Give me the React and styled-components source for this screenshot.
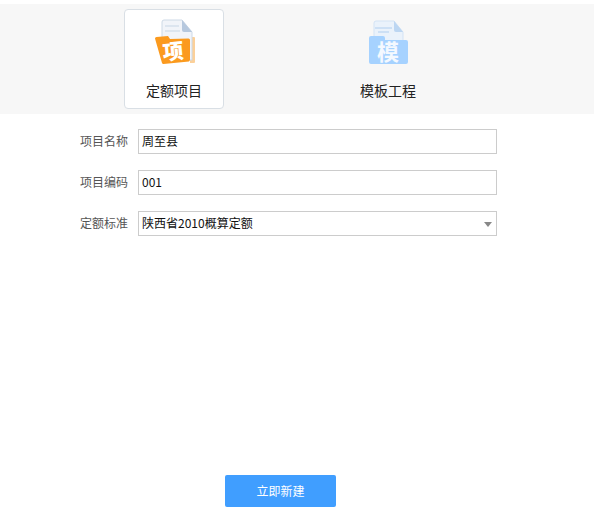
import React, { useState } from 'react'
import styled, { createGlobalStyle } from 'styled-components'

const Global = createGlobalStyle`
	html, body {
		margin: 0;
		padding: 0;
		background: #fff;
		font-family: "Noto Sans CJK SC", "Liberation Sans", sans-serif;
	}
`

const Page = styled.div`
	width: 594px;
	height: 528px;
	padding-top: 4px;
	box-sizing: border-box;
	display: flex;
	flex-direction: column;
`

const Tabs = styled.div`
	height: 110px;
	background: #f7f7f7;
	display: flex;
	gap: 114px;
	padding: 5px 0 0 124px;
	box-sizing: border-box;
`

const Tab = styled.div`
	width: 100px;
	height: 100px;
	box-sizing: border-box;
	border-radius: 4px;
	border: 1px solid ${p => (p.$active ? '#d9dfe5' : 'transparent')};
	background: ${p => (p.$active ? '#fff' : 'transparent')};
	display: flex;
	flex-direction: column;
	align-items: center;
	padding-top: 9px;
	cursor: pointer;
`

const TabIcon = styled.svg`
	width: 46px;
	height: 48px;
	display: block;
`

const TabLabel = styled.span`
	margin-top: 13px;
	font-size: 14px;
	line-height: 20px;
	color: #222;
`

const Form = styled.div`
	display: flex;
	flex-direction: column;
	gap: 16px;
	padding-top: 15px;
`

const Row = styled.div`
	display: flex;
	align-items: center;
	gap: 10px;
`

const Label = styled.label`
	width: 128px;
	text-align: right;
	font-size: 12px;
	line-height: 16px;
	padding-bottom: 2px;
	color: #555;
`

const Field = styled.div`
	position: relative;
	width: 359px;
	height: 25px;
	box-sizing: border-box;
	border: 1px solid #ccc;
	background: #fff;
	display: flex;
	align-items: center;
	padding: 0 3px 2px;
	font-size: 12px;
	color: #111;
`

const Arrow = styled.i`
	position: absolute;
	right: 4px;
	top: 10px;
	border-left: 4px solid transparent;
	border-right: 4px solid transparent;
	border-top: 5px solid #888;
`

const Footer = styled.div`
	margin-top: auto;
	padding: 0 0 21px 225px;
`

const Submit = styled.button`
	width: 111px;
	height: 32px;
	border: none;
	border-radius: 2px;
	padding: 0 0 1px;
	background: #409eff;
	color: #fff;
	font-family: inherit;
	font-size: 12px;
	cursor: pointer;
`

function ProjectIcon() {
	return (
		<TabIcon viewBox="0 0 46 48">
			<path d="M39 18h4a1 1 0 0 1 1 1v24a1 1 0 0 1-1 1h-4z" fill="#fbd09a" />
			<path d="M11 3a2 2 0 0 1 2-2h18l10 12v28H11z" fill="#f1f4f9" stroke="#cdd9e6" strokeWidth="1" />
			<path d="M31 1l10 12h-8a2 2 0 0 1-2-2z" fill="#b6c8de" />
			<path d="M14 7h14M14 12h15" stroke="#d5dfeb" strokeWidth="1.500" />
			<path d="M4 19.500a1.500 1.500 0 0 1 1.500-1.500L17 17l2 3 18.500-.5a1.500 1.500 0 0 1 1.500 1.500v20l-1 1.500L12.500 45a1.500 1.500 0 0 1-1.500-1z" fill="#fb9a1e" />
			<text x="22" y="40" textAnchor="middle" fontSize="21" fontWeight="900" fill="#fff" transform="rotate(-5 22 33)" fontFamily="'Noto Sans CJK SC', sans-serif">项</text>
		</TabIcon>
	)
}

function TemplateIcon() {
	return (
		<TabIcon viewBox="0 0 46 48">
			<path d="M9 4a2 2 0 0 1 2-2h18l9 11v12H9z" fill="#eaf2fb" stroke="#d3e3f5" strokeWidth="1" />
			<path d="M29 2l9 11h-7a2 2 0 0 1-2-2z" fill="#bcd6f2" />
			<path d="M10 9h17M13 13h11" stroke="#c4daf3" strokeWidth="1.500" />
			<path d="M4 19a2 2 0 0 1 2-2h12a2 2 0 0 1 2 2v2h21a2 2 0 0 1 2 2v20a2 2 0 0 1-2 2H6a2 2 0 0 1-2-2z" fill="#a6d2ff" />
			<text x="23" y="41" textAnchor="middle" fontSize="22" fontWeight="700" fill="#f4f9ff" fontFamily="'Noto Sans CJK SC', sans-serif">模</text>
		</TabIcon>
	)
}

export default function App() {
	const [tab, setTab] = useState('quota')
	return (
		<Page>
			<Global />
			<Tabs>
				<Tab $active={tab === 'quota'} onClick={() => setTab('quota')}>
					<ProjectIcon />
					<TabLabel>定额项目</TabLabel>
				</Tab>
				<Tab $active={tab === 'template'} onClick={() => setTab('template')}>
					<TemplateIcon />
					<TabLabel>模板工程</TabLabel>
				</Tab>
			</Tabs>
			<Form>
				<Row>
					<Label>项目名称</Label>
					<Field>周至县</Field>
				</Row>
				<Row>
					<Label>项目编码</Label>
					<Field>001</Field>
				</Row>
				<Row>
					<Label>定额标准</Label>
					<Field>陕西省2010概算定额<Arrow /></Field>
				</Row>
			</Form>
			<Footer>
				<Submit>立即新建</Submit>
			</Footer>
		</Page>
	)
}
